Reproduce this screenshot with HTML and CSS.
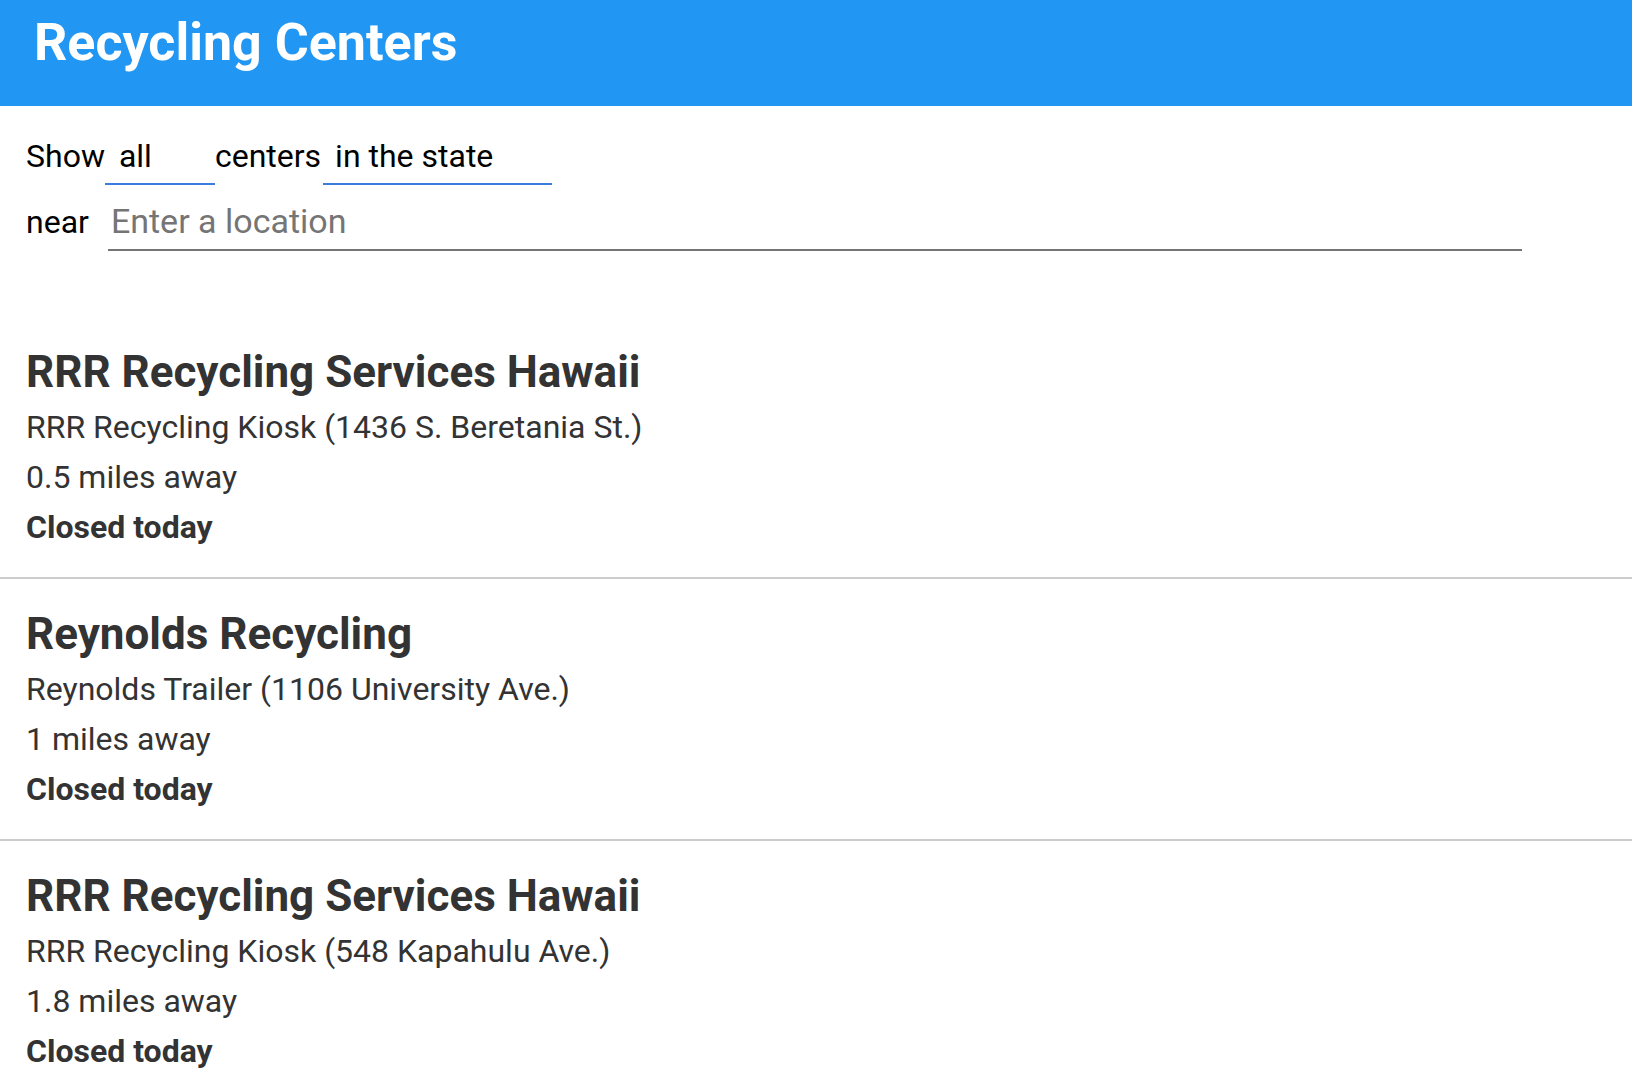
FILE: index.html
```html
<!DOCTYPE html>
<html lang="en">
<head>
<meta charset="utf-8">
<title>Recycling Centers</title>
<link rel="stylesheet" href="styles.css">
</head>
<body>
<header class="app-bar">
  <h1 class="app-title">Recycling Centers</h1>
</header>
<main>
  <form class="filters">
    <div class="filter-row">
      <span class="label">Show</span>
      <select class="choice choice-what">
        <option>all</option>
      </select>
      <span class="label">centers</span>
      <select class="choice choice-where">
        <option>in the state</option>
      </select>
    </div>
    <div class="filter-row">
      <span class="label label-near">near</span>
      <input class="location" type="text" placeholder="Enter a location">
    </div>
  </form>
  <ul class="centers">
    <li class="center">
      <h2 class="center-name">RRR Recycling Services Hawaii</h2>
      <div class="center-line">RRR Recycling Kiosk (1436 S. Beretania St.)</div>
      <div class="center-line">0.5 miles away</div>
      <div class="center-line center-status">Closed today</div>
    </li>
    <li class="center">
      <h2 class="center-name">Reynolds Recycling</h2>
      <div class="center-line">Reynolds Trailer (1106 University Ave.)</div>
      <div class="center-line">1 miles away</div>
      <div class="center-line center-status">Closed today</div>
    </li>
    <li class="center">
      <h2 class="center-name">RRR Recycling Services Hawaii</h2>
      <div class="center-line">RRR Recycling Kiosk (548 Kapahulu Ave.)</div>
      <div class="center-line">1.8 miles away</div>
      <div class="center-line center-status">Closed today</div>
    </li>
  </ul>
</main>
</body>
</html>
```

FILE: styles.css
```css
* {
  box-sizing: border-box;
}

html, body {
  margin: 0;
  padding: 0;
  background: #ffffff;
}

body {
  font-family: Roboto, "Liberation Sans", sans-serif;
  color: #333333;
}

.app-bar {
  background: #2196f3;
  height: 106px;
  padding: 12px 34px 0;
}

.app-title {
  margin: 0;
  font-size: 52px;
  font-weight: 700;
  line-height: 61px;
  color: #ffffff;
}

.filters {
  padding: 30px 0 0 26px;
}

.filter-row {
  display: flex;
  align-items: baseline;
  font-size: 32px;
  color: #000000;
}

.filter-row + .filter-row {
  margin-top: 16px;
}

.label {
  line-height: 40px;
}

.label-near {
  margin-right: 19px;
}

.choice {
  -webkit-appearance: none;
  appearance: none;
  font-family: inherit;
  font-size: 32px;
  color: #000000;
  background: transparent;
  border: none;
  border-bottom: 2px solid #3b7ddd;
  border-radius: 0;
  padding: 0 0 7px 14px;
  margin: 0;
  line-height: 40px;
  outline: none;
}

.choice-what {
  width: 110px;
}

.choice-where {
  width: 229px;
  padding-left: 12px;
  margin-left: 2px;
}

.location {
  font-family: inherit;
  font-size: 34px;
  color: #000000;
  width: 1414px;
  height: 50px;
  padding: 0 1px 8px 3px;
  border: none;
  border-bottom: 2px solid #757575;
  background: #ffffff;
  outline: none;
}

.location::placeholder {
  color: #757575;
}

.centers {
  list-style: none;
  margin: 66px 0 0;
  padding: 0;
}

.center {
  padding: 26px 0 25px 26px;
  border-bottom: 2px solid #cccccc;
}

.center-name {
  margin: 0;
  font-size: 44px;
  font-weight: 700;
  line-height: 59px;
  color: #333333;
}

.center-line {
  font-size: 32px;
  line-height: 50px;
  color: #333333;
}

.center-status {
  font-weight: 700;
}
```
